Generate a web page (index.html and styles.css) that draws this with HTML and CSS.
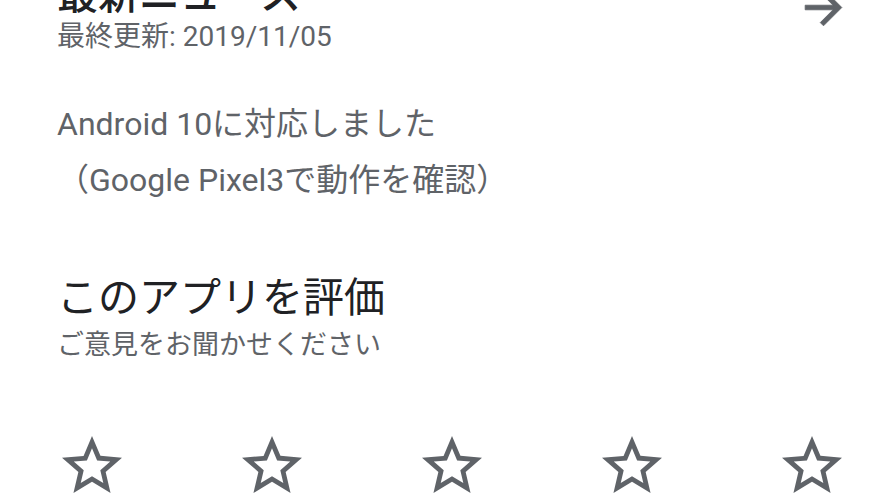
FILE: index.html
```html
<!DOCTYPE html>
<html lang="ja">
<head>
<meta charset="utf-8">
<title>最新ニュース</title>
<link rel="stylesheet" href="styles.css">
</head>
<body>
<main class="page">
  <section class="news">
    <div class="news-head">
      <div class="news-text">
        <h2 class="heading heading-strong">最新ニュース</h2>
        <div class="meta">最終更新: 2019/11/05</div>
      </div>
      <svg class="arrow" viewBox="0 0 24 24" aria-hidden="true">
        <path d="M12 4l-1.41 1.41L16.17 11H4v2h12.17l-5.58 5.59L12 20l8-8z"/>
      </svg>
    </div>
    <p class="body">Android 10に対応しました<br><span class="paren-line">（Google Pixel3で動作を確認）</span></p>
  </section>
  <section class="rate">
    <h2 class="heading">このアプリを評価</h2>
    <div class="meta meta-small">ご意見をお聞かせください</div>
    <div class="stars">
      <svg class="star" viewBox="0 0 24 24" aria-hidden="true"><path d="M22 9.24l-7.19-.62L12 2 9.19 8.63 2 9.24l5.46 4.730L5.82 21 12 17.27 18.180 21l-1.63-7.03L22 9.24zM12 15.4l-3.76 2.27 1-4.28-3.32-2.88 4.38-.38L12 6.1l1.71 4.04 4.38.38-3.32 2.88 1 4.28L12 15.4z"/></svg>
      <svg class="star" viewBox="0 0 24 24" aria-hidden="true"><path d="M22 9.24l-7.19-.62L12 2 9.19 8.63 2 9.24l5.46 4.73L5.82 21 12 17.27 18.18 21l-1.63-7.03L22 9.24zM12 15.4l-3.76 2.27 1-4.28-3.32-2.88 4.38-.38L12 6.1l1.71 4.04 4.38.38-3.32 2.88 1 4.28L12 15.4z"/></svg>
      <svg class="star" viewBox="0 0 24 24" aria-hidden="true"><path d="M22 9.24l-7.19-.62L12 2 9.19 8.63 2 9.24l5.46 4.73L5.82 21 12 17.27 18.18 21l-1.63-7.03L22 9.24zM12 15.4l-3.76 2.27 1-4.28-3.32-2.88 4.38-.38L12 6.1l1.71 4.04 4.38.38-3.32 2.88 1 4.28L12 15.4z"/></svg>
      <svg class="star" viewBox="0 0 24 24" aria-hidden="true"><path d="M22 9.24l-7.19-.62L12 2 9.19 8.63 2 9.24l5.46 4.73L5.82 21 12 17.27 18.18 21l-1.63-7.03L22 9.24zM12 15.4l-3.76 2.27 1-4.28-3.32-2.88 4.38-.38L12 6.1l1.71 4.04 4.38.38-3.32 2.88 1 4.28L12 15.4z"/></svg>
      <svg class="star" viewBox="0 0 24 24" aria-hidden="true"><path d="M22 9.24l-7.19-.62L12 2 9.19 8.63 2 9.24l5.46 4.73L5.82 21 12 17.27 18.18 21l-1.63-7.03L22 9.24zM12 15.4l-3.76 2.27 1-4.28-3.32-2.88 4.38-.38L12 6.1l1.71 4.04 4.38.38-3.32 2.88 1 4.28L12 15.4z"/></svg>
    </div>
  </section>
</main>
</body>
</html>
```

FILE: styles.css
```css
html, body {
  margin: 0;
  padding: 0;
  background: #ffffff;
}

body {
  width: 890px;
  height: 500px;
  overflow: hidden;
  font-family: Roboto, "Noto Sans CJK JP", sans-serif;
  color: #5f6368;
}

.page {
  display: flex;
  flex-direction: column;
}

.news {
  margin-top: -29px;
  padding-left: 57px;
}

.news-head {
  display: flex;
  justify-content: space-between;
  align-items: flex-start;
  padding-right: 39px;
}

.heading {
  margin: 0;
  font-size: 41px;
  line-height: 48px;
  font-weight: 400;
  color: #202124;
}

.heading-strong {
  font-weight: 500;
}

.meta {
  font-size: 28px;
  line-height: 36px;
  color: #5f6368;
}

.meta-small {
  font-size: 27px;
}

.arrow {
  width: 55px;
  height: 55px;
  margin-top: 9px;
  fill: #5f6368;
  stroke: #5f6368;
  stroke-width: 0.35;
}

.body {
  margin: 41px 0 0 0;
  font-size: 32px;
  line-height: 56px;
  color: #5f6368;
}

.rate {
  padding-left: 57px;
  margin-top: 66px;
}

.rate .meta {
  margin-top: 5px;
}

.stars {
  display: flex;
  gap: 108px;
  margin-top: 67px;
  margin-left: -1px;
}

.star {
  width: 72px;
  height: 72px;
  flex: none;
  fill: #5f6368;
}
```
